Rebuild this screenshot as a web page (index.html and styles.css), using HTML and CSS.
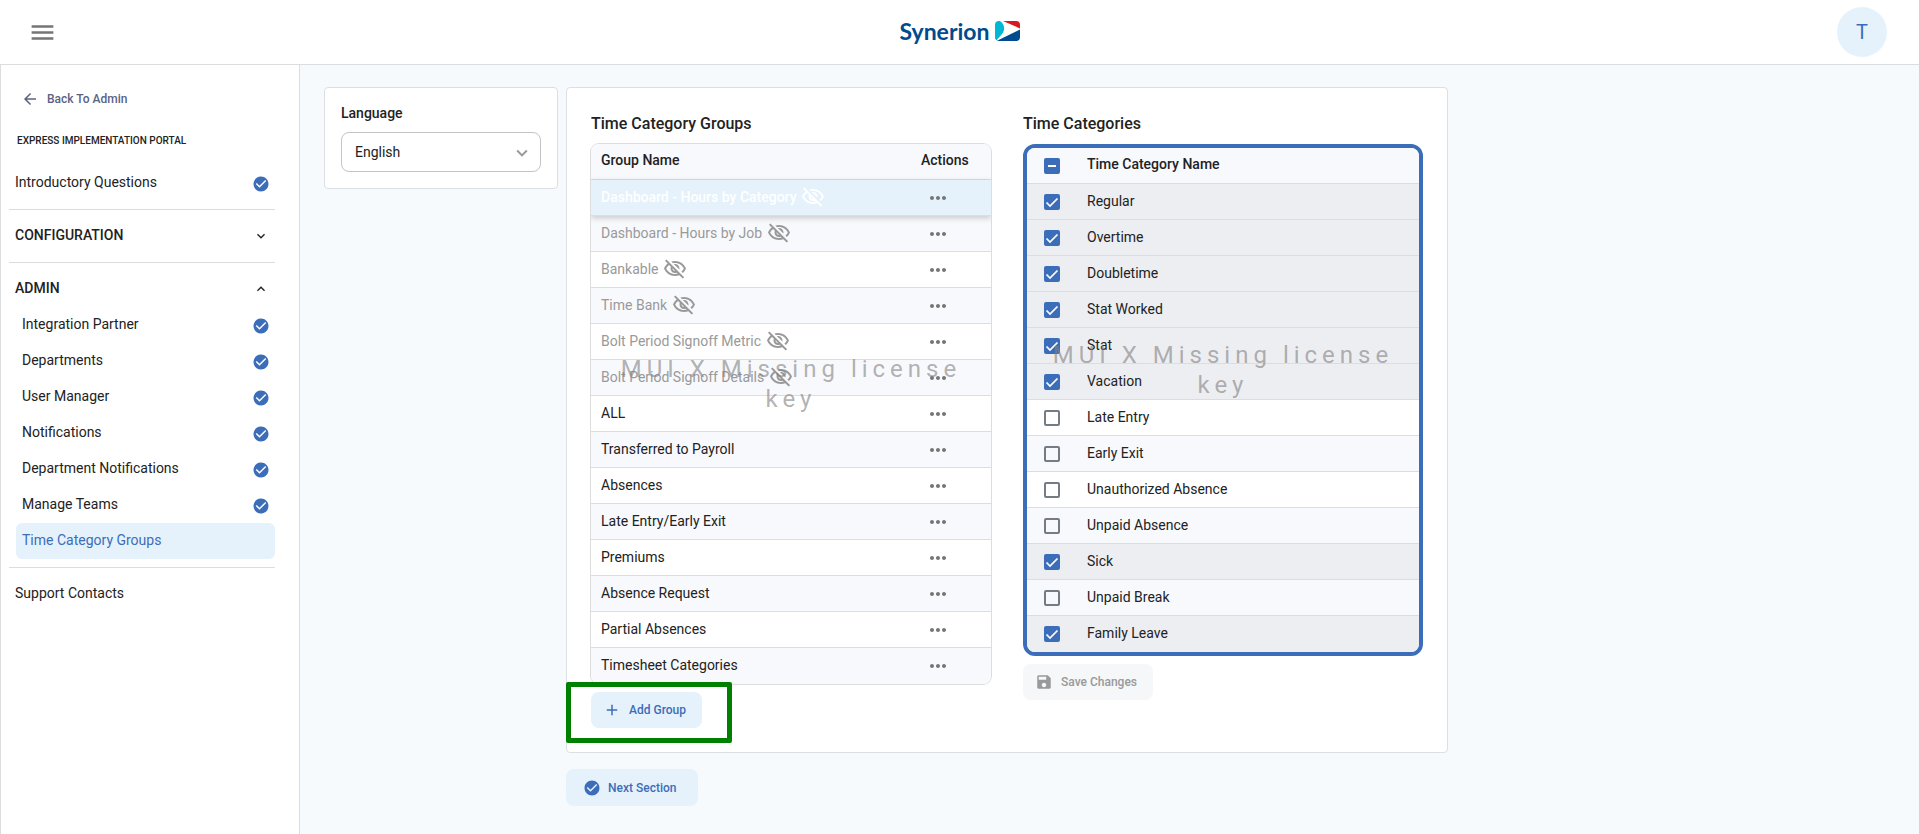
FILE: index.html
```html
<!DOCTYPE html>
<html lang="en">
<head>
    <meta charset="UTF-8">
    <meta name="viewport" content="width=device-width, initial-scale=1.0">
    <title>Time Category Groups - Synerion</title>
    <link rel="stylesheet" href="styles.css">
</head>
<body>
    <!-- shared icons -->
    <svg class="sprite" aria-hidden="true">
        <symbol id="check-circle" viewBox="0 0 24 24"><path d="M12 2C6.48 2 2 6.48 2 12s4.48 10 10 10 10-4.48 10-10S17.52 2 12 2zm-2 15-5-5 1.41-1.41L10 14.17l7.59-7.59L19 8l-9 9z"/></symbol>
        <symbol id="dots" viewBox="0 0 24 24"><path d="M6 10c-1.1 0-2 .9-2 2s.9 2 2 2 2-.9 2-2-.9-2-2-2zm12 0c-1.1 0-2 .9-2 2s.9 2 2 2 2-.9 2-2-.9-2-2-2zm-6 0c-1.1 0-2 .9-2 2s.9 2 2 2 2-.9 2-2-.9-2-2-2z"/></symbol>
        <symbol id="hidden" viewBox="0 0 24 24"><path d="M12 6c3.79 0 7.17 2.13 8.82 5.5-.59 1.22-1.42 2.27-2.41 3.12l1.41 1.41c1.39-1.23 2.49-2.77 3.18-4.53C21.27 7.11 17 4 12 4c-1.27 0-2.49.2-3.64.57l1.65 1.65C10.66 6.09 11.32 6 12 6zm-1.07 1.14L13 9.21c.57.25 1.03.71 1.28 1.28l2.07 2.07c.08-.34.14-.7.14-1.07C16.5 9.01 14.48 7 12 7c-.37 0-.72.05-1.07.14zM2.01 3.87l2.68 2.68C3.06 7.83 1.77 9.53 1 11.5 2.73 15.89 7 19 12 19c1.52 0 2.98-.29 4.32-.82l3.42 3.42 1.41-1.41L3.42 2.45 2.01 3.87zm7.5 7.5 2.61 2.61c-.04.01-.08.02-.12.02-1.38 0-2.5-1.12-2.5-2.5 0-.05.01-.08.01-.13zm-3.4-3.4 1.75 1.75c-.23.55-.36 1.15-.36 1.78 0 2.48 2.02 4.5 4.5 4.5.63 0 1.23-.13 1.77-.36l.98.98c-.88.24-1.8.38-2.75.38-3.79 0-7.17-2.13-8.82-5.5.7-1.43 1.72-2.61 2.93-3.53z"/></symbol>
        <symbol id="chevron" viewBox="0 0 24 24"><path d="M7.41 8.59 12 13.17l4.59-4.58L18 10l-6 6-6-6 1.41-1.41z"/></symbol>
    </svg>

    <header class="topbar">
        <button class="menu-btn" type="button" aria-label="Menu">
            <svg viewBox="0 0 24 24"><path d="M3 18h18v-2H3v2zm0-5h18v-2H3v2zm0-7v2h18V6H3z"/></svg>
        </button>
        <div class="logo">
            <span>Synerion</span>
            <svg viewBox="0 0 25 20">
                <clipPath id="mark"><rect width="25" height="20" rx="4"/></clipPath>
                <g clip-path="url(#mark)">
                    <path fill="#fff" d="M0 0h25v20H0z"/>
                    <path fill="#d71920" d="M8 0h17v7.500z"/>
                    <path fill="#004b8d" d="M25 8.500V20H1.500z"/>
                    <path fill="#00b8d4" d="M0 0h5c4.500 3 5.500 8.500 2 13l-6 7H0z"/>
                </g>
            </svg>
        </div>
        <button class="avatar" type="button">T</button>
    </header>

    <div class="layout">
        <nav class="sidebar">
            <a class="back" href="#">
                <svg viewBox="0 0 24 24"><path d="M20 11H7.83l5.59-5.59L12 4l-8 8 8 8 1.41-1.41L7.83 13H20v-2z"/></svg>
                Back To Admin
            </a>
            <h1>Express Implementation Portal</h1>
            <a class="nav-item" href="#">Introductory Questions <svg><use href="#check-circle"/></svg></a>
            <hr>
            <button class="nav-item nav-group" type="button">CONFIGURATION <svg><use href="#chevron"/></svg></button>
            <hr>
            <button class="nav-item nav-group open" type="button">ADMIN <svg><use href="#chevron"/></svg></button>
            <div class="nav-sub">
                <a class="nav-item" href="#">Integration Partner <svg><use href="#check-circle"/></svg></a>
                <a class="nav-item" href="#">Departments <svg><use href="#check-circle"/></svg></a>
                <a class="nav-item" href="#">User Manager <svg><use href="#check-circle"/></svg></a>
                <a class="nav-item" href="#">Notifications <svg><use href="#check-circle"/></svg></a>
                <a class="nav-item" href="#">Department Notifications <svg><use href="#check-circle"/></svg></a>
                <a class="nav-item" href="#">Manage Teams <svg><use href="#check-circle"/></svg></a>
                <a class="nav-item active" href="#">Time Category Groups</a>
            </div>
            <hr>
            <a class="nav-item" href="#">Support Contacts</a>
        </nav>

        <main class="main">
            <section class="card language">
                <label for="language">Language</label>
                <div class="select">
                    <select id="language">
                        <option>English</option>
                    </select>
                    <svg><use href="#chevron"/></svg>
                </div>
            </section>

            <div class="content">
                <div class="card panels">
                    <section class="panel">
                        <h2>Time Category Groups</h2>
                        <div class="grid">
                            <table>
                                <thead>
                                    <tr><th>Group Name</th><th class="actions">Actions</th></tr>
                                </thead>
                                <tbody>
                                    <tr class="muted selected"><td><span class="name">Dashboard - Hours by Category <svg><use href="#hidden"/></svg></span></td><td><button class="more" type="button" aria-label="Actions"><svg><use href="#dots"/></svg></button></td></tr>
                                    <tr class="muted"><td><span class="name">Dashboard - Hours by Job <svg><use href="#hidden"/></svg></span></td><td><button class="more" type="button" aria-label="Actions"><svg><use href="#dots"/></svg></button></td></tr>
                                    <tr class="muted"><td><span class="name">Bankable <svg><use href="#hidden"/></svg></span></td><td><button class="more" type="button" aria-label="Actions"><svg><use href="#dots"/></svg></button></td></tr>
                                    <tr class="muted"><td><span class="name">Time Bank <svg><use href="#hidden"/></svg></span></td><td><button class="more" type="button" aria-label="Actions"><svg><use href="#dots"/></svg></button></td></tr>
                                    <tr class="muted"><td><span class="name">Bolt Period Signoff Metric <svg><use href="#hidden"/></svg></span></td><td><button class="more" type="button" aria-label="Actions"><svg><use href="#dots"/></svg></button></td></tr>
                                    <tr class="muted"><td><span class="name">Bolt Period Signoff Details <svg><use href="#hidden"/></svg></span></td><td><button class="more" type="button" aria-label="Actions"><svg><use href="#dots"/></svg></button></td></tr>
                                    <tr><td>ALL</td><td><button class="more" type="button" aria-label="Actions"><svg><use href="#dots"/></svg></button></td></tr>
                                    <tr><td>Transferred to Payroll</td><td><button class="more" type="button" aria-label="Actions"><svg><use href="#dots"/></svg></button></td></tr>
                                    <tr><td>Absences</td><td><button class="more" type="button" aria-label="Actions"><svg><use href="#dots"/></svg></button></td></tr>
                                    <tr><td>Late Entry/Early Exit</td><td><button class="more" type="button" aria-label="Actions"><svg><use href="#dots"/></svg></button></td></tr>
                                    <tr><td>Premiums</td><td><button class="more" type="button" aria-label="Actions"><svg><use href="#dots"/></svg></button></td></tr>
                                    <tr><td>Absence Request</td><td><button class="more" type="button" aria-label="Actions"><svg><use href="#dots"/></svg></button></td></tr>
                                    <tr><td>Partial Absences</td><td><button class="more" type="button" aria-label="Actions"><svg><use href="#dots"/></svg></button></td></tr>
                                    <tr><td>Timesheet Categories</td><td><button class="more" type="button" aria-label="Actions"><svg><use href="#dots"/></svg></button></td></tr>
                                </tbody>
                            </table>
                            <div class="watermark">MUI X Missing license key</div>
                        </div>
                        <div class="add-group">
                            <button class="btn" type="button">
                                <svg viewBox="0 0 24 24"><path d="M19 13h-6v6h-2v-6H5v-2h6V5h2v6h6v2z"/></svg>
                                Add Group
                            </button>
                            <div class="highlight"></div>
                        </div>
                    </section>

                    <section class="panel">
                        <h2>Time Categories</h2>
                        <div class="grid grid-active">
                            <table>
                                <thead>
                                    <tr><th class="check"><input type="checkbox" class="some" aria-label="Select all"></th><th>Time Category Name</th></tr>
                                </thead>
                                <tbody>
                                    <tr class="checked"><td class="check"><input type="checkbox" id="c1" checked></td><td><label for="c1">Regular</label></td></tr>
                                    <tr class="checked"><td class="check"><input type="checkbox" id="c2" checked></td><td><label for="c2">Overtime</label></td></tr>
                                    <tr class="checked"><td class="check"><input type="checkbox" id="c3" checked></td><td><label for="c3">Doubletime</label></td></tr>
                                    <tr class="checked"><td class="check"><input type="checkbox" id="c4" checked></td><td><label for="c4">Stat Worked</label></td></tr>
                                    <tr class="checked"><td class="check"><input type="checkbox" id="c5" checked></td><td><label for="c5">Stat</label></td></tr>
                                    <tr class="checked"><td class="check"><input type="checkbox" id="c6" checked></td><td><label for="c6">Vacation</label></td></tr>
                                    <tr><td class="check"><input type="checkbox" id="c7"></td><td><label for="c7">Late Entry</label></td></tr>
                                    <tr><td class="check"><input type="checkbox" id="c8"></td><td><label for="c8">Early Exit</label></td></tr>
                                    <tr><td class="check"><input type="checkbox" id="c9"></td><td><label for="c9">Unauthorized Absence</label></td></tr>
                                    <tr><td class="check"><input type="checkbox" id="c10"></td><td><label for="c10">Unpaid Absence</label></td></tr>
                                    <tr class="checked"><td class="check"><input type="checkbox" id="c11" checked></td><td><label for="c11">Sick</label></td></tr>
                                    <tr><td class="check"><input type="checkbox" id="c12"></td><td><label for="c12">Unpaid Break</label></td></tr>
                                    <tr class="checked"><td class="check"><input type="checkbox" id="c13" checked></td><td><label for="c13">Family Leave</label></td></tr>
                                </tbody>
                            </table>
                            <div class="watermark">MUI X Missing license key</div>
                        </div>
                        <button class="btn btn-save" type="button" disabled>
                            <svg viewBox="0 0 24 24"><path d="M17 3H5c-1.11 0-2 .9-2 2v14c0 1.1.89 2 2 2h14c1.1 0 2-.9 2-2V7l-4-4zm-5 16c-1.66 0-3-1.34-3-3s1.34-3 3-3 3 1.34 3 3-1.34 3-3 3zm3-10H5V5h10v4z"/></svg>
                            Save Changes
                        </button>
                    </section>
                </div>
                <button class="btn btn-next" type="button">
                    <svg><use href="#check-circle"/></svg>
                    Next Section
                </button>
            </div>
        </main>
    </div>
</body>
</html>
```

FILE: styles.css
```css
* { box-sizing: border-box; }

body {
    margin: 0;
    min-height: 100vh;
    display: flex;
    flex-direction: column;
    font-family: Roboto, "Liberation Sans", sans-serif;
    font-size: 14px;
    line-height: 20px;
    color: #222;
    background: #f6fafd;
}

button, select { font: inherit; color: inherit; border: 0; background: none; padding: 0; cursor: pointer; }
a { color: inherit; text-decoration: none; }
svg { display: block; fill: currentColor; flex: none; }
.sprite { display: none; }

/* Top bar */
.topbar {
    display: grid;
    grid-template-columns: 1fr auto 1fr;
    align-items: center;
    height: 65px;
    padding: 0 32px;
    background: #fff;
    border-bottom: 1px solid #dcdddf;
}
.menu-btn { justify-self: start; margin-left: -4px; color: #757575; }
.menu-btn svg { width: 29px; height: 29px; }
.logo { display: flex; align-items: center; gap: 5px; padding-bottom: 2px; font-family: Lato, sans-serif; font-size: 23px; font-weight: 700; line-height: 24px; color: #004b8d; }
.logo svg { width: 25px; height: 20px; }
.avatar { justify-self: end; width: 50px; height: 50px; border-radius: 50%; font-size: 20px; color: #3c6db8; background: #e5f2fc; }

.layout { display: flex; flex: 1; }

/* Sidebar */
.sidebar { flex: 0 0 300px; padding: 16px 24px 16px 8px; background: #fff; border: solid #dcdddf; border-width: 0 1px; }
.back { display: flex; align-items: center; gap: 8px; height: 36px; padding-left: 12px; font-size: 12px; font-weight: 500; color: #5a6384; }
.back svg { width: 18px; height: 18px; }
.sidebar h1 { margin: 16px 0; padding-left: 8px; font-size: 10px; font-weight: 500; line-height: 16px; text-transform: uppercase; }
.sidebar hr { margin: 8px 0; border: 0; border-top: 1px solid #dcdddf; }
.nav-item { display: flex; align-items: center; justify-content: space-between; width: 100%; height: 36px; padding: 0 5px 2px 6px; border-radius: 6px; }
.nav-item svg { width: 18px; height: 18px; margin-top: 3px; color: #3c6db8; }
.nav-group { font-weight: 500; }
.nav-group svg { width: 16px; height: 16px; margin: 1px 1px 0 0; color: #222; }
.nav-group.open svg { transform: rotate(180deg); }
.nav-sub { padding-left: 7px; }
.active { color: #3c6db8; background: #e5f2fc; }

/* Main area */
.main { flex: 1; display: flex; align-items: flex-start; gap: 8px; padding: 22px 24px; }
.card { background: #fff; border: 1px solid #dcdfe3; border-radius: 4px; }
.language { flex: 0 0 234px; padding: 15px 16px 16px; }
.language label { display: block; margin-bottom: 9px; font-weight: 500; }
.select { position: relative; }
.select select { display: block; width: 100%; height: 40px; padding: 0 13px; border: 1px solid #c4c4c4; border-radius: 8px; background: #fff; appearance: none; }
.select svg { position: absolute; top: 10px; right: 8px; width: 22px; height: 22px; color: #999; pointer-events: none; }

.content { flex: 0 1 882px; }
.panels { display: grid; grid-template-columns: 1fr 1fr; gap: 32px; padding: 24px; margin-bottom: 16px; }
.panel h2 { margin: 0 0 8px; font-size: 16px; font-weight: 500; line-height: 24px; }

/* Data grids */
.grid { position: relative; margin-bottom: 8px; border-radius: 8px; box-shadow: 0 0 0 1px #dcdddf; overflow: hidden; }
.grid-active { border: 4px solid #3c6db8; border-radius: 12px; box-shadow: none; }
table { width: 100%; border-spacing: 0; table-layout: fixed; }
th, td { height: 36px; padding: 0 10px 2px; text-align: left; line-height: 20px; border-bottom: 1px solid #dcdddf; }
th { padding-bottom: 3px; font-weight: 500; background: #f8f9fd; }
tbody tr:last-child td { border-bottom: 0; }
tbody tr { background: #fff; }
tbody tr:nth-child(even) { background: #f8f9fd; }
tbody .checked, tbody .checked:nth-child(even) { background: #edeef2; }
.actions { width: 80px; }
.name { display: flex; align-items: center; gap: 5px; }
.name svg { width: 24px; height: 24px; margin-top: 1px; }
.muted { color: #999; }
.selected { position: relative; font-weight: 500; color: #fff; }
.selected .name { gap: 4px; }
tbody .selected { background: #e5f2fc; box-shadow: 0 2px 6px rgba(0, 0, 0, 0.2); }
.more { display: block; padding: 2px 5px 0; color: #757575; }
.more svg { width: 24px; height: 24px; }

.check { width: 50px; padding: 0 17px; }
.check + td, .check + th { padding-left: 10px; }
input[type="checkbox"] { display: block; width: 16px; height: 16px; margin: 0; border: 2px solid #757c85; border-radius: 2px; appearance: none; }
input[type="checkbox"]:checked, input[type="checkbox"].some { border: 0; background: #3c6db8 center / 16px 16px no-repeat; }
input[type="checkbox"]:checked { background-image: url("data:image/svg+xml,%3Csvg xmlns='http://www.w3.org/2000/svg' viewBox='0 0 16 16'%3E%3Cpath d='M2.5 8.5 6 12l7.5-7.5' fill='none' stroke='white' stroke-width='1.7'/%3E%3C/svg%3E"); }
input[type="checkbox"].some { background-image: url("data:image/svg+xml,%3Csvg xmlns='http://www.w3.org/2000/svg' viewBox='0 0 16 16'%3E%3Cpath d='M4 8h8' stroke='white' stroke-width='2'/%3E%3C/svg%3E"); }

.watermark {
    position: absolute;
    top: 210px;
    left: 0;
    width: 100%;
    padding: 0 8px;
    font-size: 24px;
    line-height: 30px;
    letter-spacing: 5px;
    text-align: center;
    color: #8282829e;
    pointer-events: none;
}
.grid-active .watermark { top: 192px; }

/* Buttons */
.btn { display: inline-flex; align-items: center; gap: 8px; height: 36px; padding: 0 16px 0 12px; border-radius: 8px; font-size: 12px; font-weight: 500; color: #3c6db8; background: #e5f2fc; }
.btn svg { width: 18px; height: 18px; }
.btn-save { color: #999; background: #f5f7f9; }
.btn-next { height: 37px; gap: 7px; padding: 0 22px 0 17px; }

.add-group { position: relative; display: flex; }
.highlight { position: absolute; top: -10px; left: -25px; width: 166px; height: 61px; border: 5px solid #008000; border-radius: 2px; pointer-events: none; }
```
